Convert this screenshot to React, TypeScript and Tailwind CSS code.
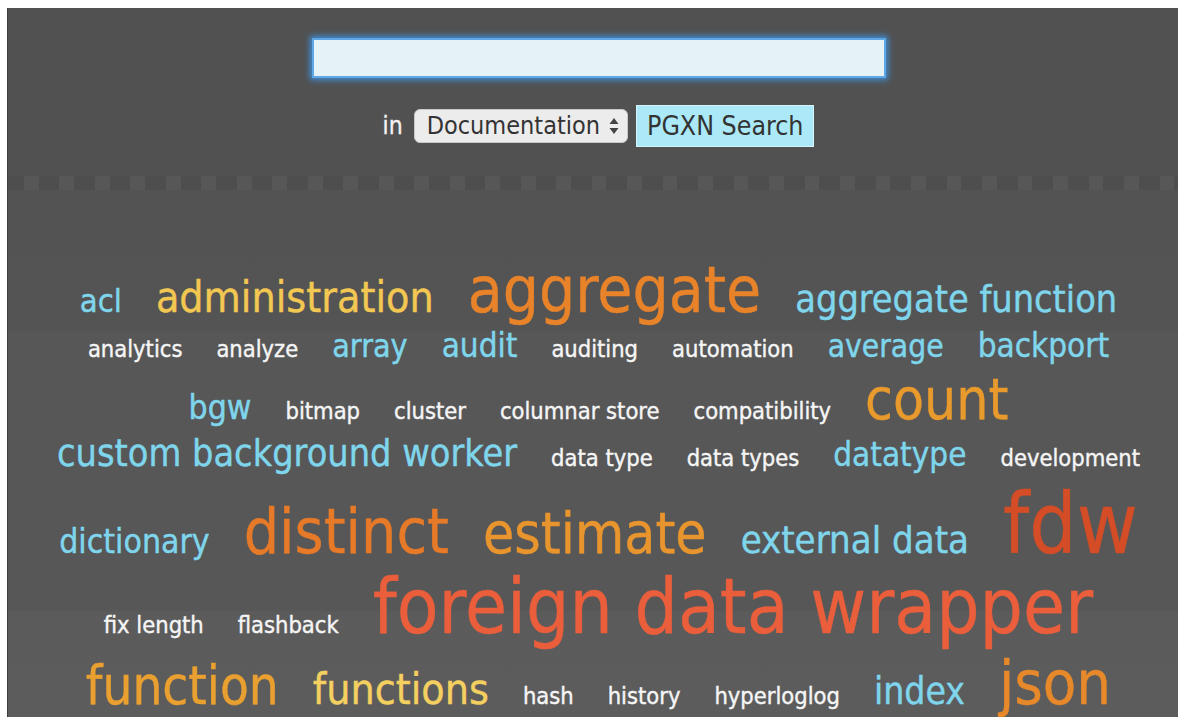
import React from "react";

type Tag = { label: string; cls: string };

const BLUE = "text-[#7fd6ec]";
const SMALL = "text-[23.5px] text-[#f5f5f5]";

// tag cloud rows: each word carries its own size + colour class
const rows: { h: string; tags: Tag[] }[] = [
  {
    h: "h-[70px]",
    tags: [
      { label: "acl", cls: `text-[32.5px] ${BLUE}` },
      { label: "administration", cls: "text-[42.5px] text-[#f2c852]" },
      { label: "aggregate", cls: "text-[63.5px] text-[#e8832a]" },
      { label: "aggregate function", cls: `text-[37.5px] ${BLUE}` },
    ],
  },
  {
    h: "h-[43px]",
    tags: [
      { label: "analytics", cls: SMALL },
      { label: "analyze", cls: SMALL },
      { label: "array", cls: `text-[32px] ${BLUE}` },
      { label: "audit", cls: `text-[33px] ${BLUE}` },
      { label: "auditing", cls: SMALL },
      { label: "automation", cls: SMALL },
      { label: "average", cls: `text-[31.5px] ${BLUE}` },
      { label: "backport", cls: `text-[33px] ${BLUE}` },
    ],
  },
  {
    h: "h-[63px]",
    tags: [
      { label: "bgw", cls: `text-[33.5px] ${BLUE}` },
      { label: "bitmap", cls: SMALL },
      { label: "cluster", cls: SMALL },
      { label: "columnar store", cls: SMALL },
      { label: "compatibility", cls: SMALL },
      { label: "count", cls: "text-[56.5px] text-[#e99a2c]" },
    ],
  },
  {
    h: "h-[48px]",
    tags: [
      { label: "custom background worker", cls: `text-[37.5px] ${BLUE}` },
      { label: "data type", cls: SMALL },
      { label: "data types", cls: SMALL },
      { label: "datatype", cls: `text-[33px] ${BLUE}` },
      { label: "development", cls: SMALL },
    ],
  },
  {
    h: "h-[86px]",
    tags: [
      { label: "dictionary", cls: `text-[33.5px] ${BLUE}` },
      { label: "distinct", cls: "text-[62px] text-[#e67a28]" },
      { label: "estimate", cls: "text-[56.5px] text-[#e9952e]" },
      { label: "external data", cls: `text-[38px] ${BLUE}` },
      { label: "fdw", cls: "text-[83px] text-[#d44d26]" },
    ],
  },
  {
    h: "h-[83px]",
    tags: [
      { label: "fix length", cls: SMALL },
      { label: "flashback", cls: SMALL },
      { label: "foreign data wrapper", cls: "text-[76px] text-[#ea5e3c]" },
    ],
  },
  {
    h: "h-[80px]",
    tags: [
      { label: "function", cls: "text-[52.5px] text-[#eaa030]" },
      { label: "functions", cls: "text-[42.5px] text-[#f3d060]" },
      { label: "hash", cls: SMALL },
      { label: "history", cls: SMALL },
      { label: "hyperloglog", cls: SMALL },
      { label: "index", cls: `text-[37px] ${BLUE}` },
      { label: "json", cls: "text-[61px] text-[#e7892a]" },
    ],
  },
];

const SelectArrows = () => (
  <svg width="10" height="20" viewBox="0 0 10 20" className="ml-[9px]">
    <path d="M5 2 L9.5 8 L0.5 8 Z" fill="#444" />
    <path d="M5 18 L9.5 12 L0.5 12 Z" fill="#444" />
  </svg>
);

export default function App() {
  return (
    <div className="min-h-[717px] bg-white pt-2 pl-[7px] font-[family-name:'DejaVu_Sans_Condensed','DejaVu_Sans',sans-serif] font-stretch-condensed">
      <div className="min-h-[709px] border-l border-[#3e3e3e] bg-[#515151]">
        {/* search block */}
        <div className="flex flex-col items-center pl-[11px] pt-[30px] h-[168px]">
          <input
            type="text"
            className="w-[574px] h-[40px] bg-[#e5f2f8] border-2 border-[#5fa8e6] shadow-[0_0_6px_2px_#3f8fd8] outline-none"
          />
          <div className="flex items-center mt-[27px]">
            <span className="text-[24.5px] text-[#f2f2f2] mr-[11px] [-webkit-text-stroke:0.3px_#f2f2f2]">in</span>
            <div className="flex items-center h-[34px] pl-[12px] pr-[8px] rounded-[6px] bg-[#ececec] border border-[#c8c8c8] text-[25px] text-[#333]">
              Documentation
              <SelectArrows />
            </div>
            <button className="ml-[8px] h-[42px] px-[10px] bg-[#abe9f8] border border-[#d4f5fc] text-[26.5px] text-[#333]">
              PGXN Search
            </button>
          </div>
        </div>

        {/* dashed divider */}
        <div className="h-[14px] bg-[repeating-linear-gradient(90deg,#575757_0px,#575757_14.5px,#4e4e4e_14.5px,#4e4e4e_35.5px)] bg-[position:16px_0]" />

        {/* tag cloud */}
        <div className="min-h-[527px] bg-[linear-gradient(180deg,#535353_0px,#545454_140px,#575757_142px,#575757_420px,#5b5b5b_422px,#5c5c5c_527px)] pt-[69px] pl-[11px]">
          {rows.map((row, i) => (
            <div
              key={i}
              className={`flex justify-center items-baseline gap-x-[34px] whitespace-nowrap ${row.h}`}
            >
              {row.tags.map((t) => (
                <a
                  key={t.label}
                  href="#"
                  className={`leading-none [-webkit-text-stroke:0.4px_currentColor] ${t.cls}`}
                >
                  {t.label}
                </a>
              ))}
            </div>
          ))}
        </div>
      </div>
    </div>
  );
}
